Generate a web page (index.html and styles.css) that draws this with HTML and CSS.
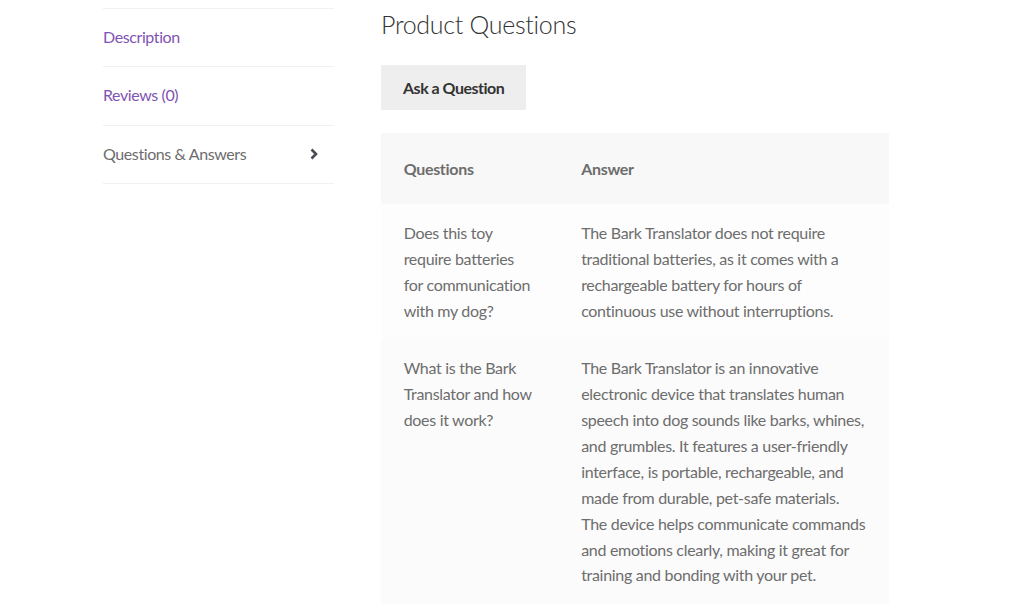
FILE: index.html
```html
<!DOCTYPE html>
<html lang="en">
<head>
<meta charset="utf-8">
<title>Product Questions</title>
<link rel="stylesheet" href="styles.css">
</head>
<body>
<div class="page">
  <ul class="tabs">
    <li class="tab"><a href="#" class="tab-link">Description</a></li>
    <li class="tab"><a href="#" class="tab-link">Reviews (0)</a></li>
    <li class="tab active"><a href="#" class="tab-link">Questions &amp; Answers</a>
      <svg class="chev" viewBox="0 0 8 12" width="8" height="12" aria-hidden="true"><path d="M1.5 1.5 L6 6 L1.5 10.5" fill="none" stroke="currentColor" stroke-width="2.6" stroke-linejoin="miter"/></svg>
    </li>
  </ul>
  <main class="main">
    <h2 class="title">Product Questions</h2>
    <button class="ask" type="button">Ask a Question</button>
    <table class="qa">
      <colgroup><col class="col-q"><col class="col-a"></colgroup>
      <thead>
        <tr><th>Questions</th><th>Answer</th></tr>
      </thead>
      <tbody>
        <tr>
          <td>Does this toy require batteries for communication with my dog?</td>
          <td>The Bark Translator does not require traditional batteries, as it comes with a rechargeable battery for hours of continuous use without interruptions.</td>
        </tr>
        <tr>
          <td>What is the Bark Translator and how does it work?</td>
          <td>The Bark Translator is an innovative electronic device that translates human speech into dog sounds like barks, whines, and grumbles. It features a user-friendly interface, is portable, rechargeable, and made from durable, pet-safe materials. The device helps communicate commands and emotions clearly, making it great for training and bonding with your pet.</td>
        </tr>
      </tbody>
    </table>
  </main>
</div>
</body>
</html>
```

FILE: styles.css
```css
* { box-sizing: border-box; }
html, body { margin: 0; padding: 0; background: #fff; }
body {
  font-family: "Lato", "Liberation Sans", sans-serif;
  font-size: 16px;
  line-height: 1.618;
  letter-spacing: -0.3px;
  color: #6d6d6d;
  overflow: hidden;
}
.page {
  display: flex;
  align-items: flex-start;
  gap: 47px;
  padding-left: 103px;
}
.tabs {
  list-style: none;
  margin: 8px 0 0;
  padding: 0;
  width: 231px;
  flex: none;
  border-top: 1px solid #f0f0f0;
}
.tab {
  position: relative;
  border-bottom: 1px solid #f0f0f0;
}
.tab-link {
  display: block;
  padding: 15px 0 16.5px;
  color: #7f54b3;
  letter-spacing: -0.4px;
  text-decoration: none;
}
.tab.active .tab-link { color: #6d6d6d; }
.chev {
  position: absolute;
  right: 16px;
  top: 50%;
  margin-top: -6px;
  color: #4a4a55;
}
.main {
  width: 508px;
  flex: none;
}
.title {
  margin: 8px 0 25px;
  font-size: 25px;
  line-height: 32px;
  font-weight: 300;
  letter-spacing: -0.3px;
  color: #333;
}
.ask {
  display: block;
  margin: 0 0 23px;
  border: 0;
  background: #eeeeee;
  color: #333;
  font: inherit;
  font-weight: 700;
  letter-spacing: -0.5px;
  padding: 10px 22px;
  height: 45px;
  cursor: pointer;
}
.qa {
  width: 100%;
  table-layout: fixed;
  border-collapse: collapse;
  border-spacing: 0;
}
.col-q { width: 177.5px; }
.qa th {
  background: #f8f8f8;
  text-align: left;
  font-weight: 700;
  color: #6d6d6d;
  padding: 22.5px 22.65px;
}
.qa td {
  background: #fdfdfd;
  padding: 16px 22.65px;
  vertical-align: top;
}
.qa tbody tr:nth-child(2n) td { background: #fbfbfb; }
```
